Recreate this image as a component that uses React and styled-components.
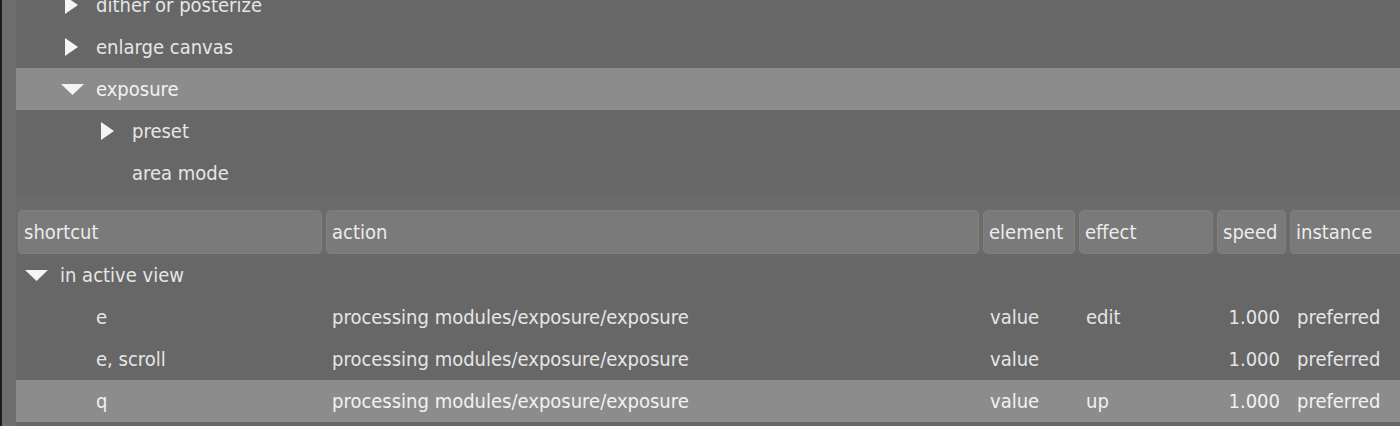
import React from 'react';
import styled, { createGlobalStyle } from 'styled-components';

const GlobalStyle = createGlobalStyle`
  html, body {
    margin: 0;
    padding: 0;
    background: #1c1c1c;
    overflow: hidden;
  }
  body {
    font-family: "DejaVu Sans Condensed", "DejaVu Sans", sans-serif;
    font-stretch: condensed;
    font-size: 20px;
    color: #e6e6e6;
  }
`;

const Page = styled.div`
  display: flex;
  height: 426px;
  padding-left: 2px;
`;

const Strip = styled.div`
  width: 14px;
  flex: none;
  background: #6e6e6e;
`;

const Main = styled.div`
  flex: 1;
  display: flex;
  flex-direction: column;
  background: #676767;
  overflow: hidden;
`;

const TreePanel = styled.div`
  height: 197px;
  flex: none;
  overflow: hidden;
  background: #676767;
`;

// the tree is scrolled a little, the first row is half hidden
const TreeBody = styled.div`
  margin-top: -16px;
`;

const Row = styled.div`
  display: flex;
  align-items: center;
  height: 42px;
  padding-left: ${p => p.$indent}px;
  background: ${p => (p.$selected ? '#8c8c8c' : 'transparent')};
  color: ${p => (p.$selected ? '#f2f2f2' : '#e6e6e6')};
  white-space: nowrap;
`;

const ExpanderBox = styled.span`
  width: 36px;
  height: 42px;
  flex: none;
  display: flex;
  align-items: center;
  justify-content: flex-start;
  padding-left: ${p => (p.$arrow === 'down' ? 1 : p.$arrow === 'right' ? 5 : 0)}px;
  box-sizing: border-box;
`;

const Gap = styled.div`
  height: 11px;
  flex: none;
  background: #6b6b6b;
`;

const Table = styled.div`
  display: grid;
  grid-template-columns: 308px 657px 96px 138px 73px 1fr;
  background: #676767;
`;

const HeaderCell = styled.div`
  background: #6b6b6b;
  padding: 2px 2px;
  height: 46px;
  box-sizing: border-box;
`;

const HeaderButton = styled.div`
  height: 42px;
  display: flex;
  align-items: center;
  padding: 0 5px;
  background: #7a7a7a;
  border: 1px solid #808080;
  border-radius: 5px;
  color: #ececec;
  white-space: nowrap;
  overflow: hidden;
  margin-right: ${p => (p.$open ? '-8px' : '0')};
  border-right: ${p => (p.$open ? 'none' : '1px solid #808080')};
`;

const GroupRow = styled.div`
  grid-column: 1 / -1;
  display: flex;
  align-items: center;
  height: 42px;
  padding-left: 8px;
`;

const Cell = styled.div`
  height: 42px;
  display: flex;
  align-items: center;
  justify-content: ${p => (p.$right ? 'flex-end' : 'flex-start')};
  padding: 0 ${p => (p.$right ? '8px' : '0')} 0 ${p => p.$pad ?? 8}px;
  background: ${p => (p.$selected ? '#8c8c8c' : 'transparent')};
  color: ${p => (p.$selected ? '#f2f2f2' : '#e6e6e6')};
  white-space: nowrap;
  overflow: hidden;
`;

const Right = () => (
  <svg width="13" height="18" viewBox="0 0 13 18">
    <polygon points="0,0 13,9 0,18" fill="#f4f4f4" />
  </svg>
);

const Down = () => (
  <svg width="23" height="11" viewBox="0 0 23 11">
    <polygon points="0,0 23,0 11.5,11" fill="#f4f4f4" />
  </svg>
);

const Expander = ({ arrow }) => (
  <ExpanderBox $arrow={arrow}>
    {arrow === 'right' && <Right />}
    {arrow === 'down' && <Down />}
  </ExpanderBox>
);

const topTree = [
  { label: 'dither or posterize', indent: 44, arrow: 'right' },
  { label: 'enlarge canvas', indent: 44, arrow: 'right' },
  { label: 'exposure', indent: 44, arrow: 'down', selected: true },
  { label: 'preset', indent: 80, arrow: 'right' },
  { label: 'area mode', indent: 80 },
];

const columns = ['shortcut', 'action', 'element', 'effect', 'speed', 'instance'];

const shortcuts = [
  { key: 'e', action: 'processing modules/exposure/exposure', element: 'value', effect: 'edit', speed: '1.000', instance: 'preferred' },
  { key: 'e, scroll', action: 'processing modules/exposure/exposure', element: 'value', effect: '', speed: '1.000', instance: 'preferred' },
  { key: 'q', action: 'processing modules/exposure/exposure', element: 'value', effect: 'up', speed: '1.000', instance: 'preferred', selected: true },
];

export default function App() {
  return (
    <>
      <GlobalStyle />
      <Page>
        <Strip />
        <Main>
          <TreePanel>
            <TreeBody>
              {topTree.map(item => (
                <Row key={item.label} $indent={item.indent} $selected={item.selected}>
                  <Expander arrow={item.arrow} />
                  {item.label}
                </Row>
              ))}
            </TreeBody>
          </TreePanel>
          <Gap />
          <Table>
            {columns.map((c, i) => (
              <HeaderCell key={c}>
                <HeaderButton $open={i === columns.length - 1}>{c}</HeaderButton>
              </HeaderCell>
            ))}
            <GroupRow>
              <Expander arrow="down" />
              in active view
            </GroupRow>
            {shortcuts.map(s => (
              <React.Fragment key={s.key}>
                <Cell $selected={s.selected} $pad={80}>{s.key}</Cell>
                <Cell $selected={s.selected}>{s.action}</Cell>
                <Cell $selected={s.selected} $pad={9}>{s.element}</Cell>
                <Cell $selected={s.selected} $pad={9}>{s.effect}</Cell>
                <Cell $selected={s.selected} $right $pad={0}>{s.speed}</Cell>
                <Cell $selected={s.selected} $pad={9}>{s.instance}</Cell>
              </React.Fragment>
            ))}
          </Table>
        </Main>
      </Page>
    </>
  );
}
